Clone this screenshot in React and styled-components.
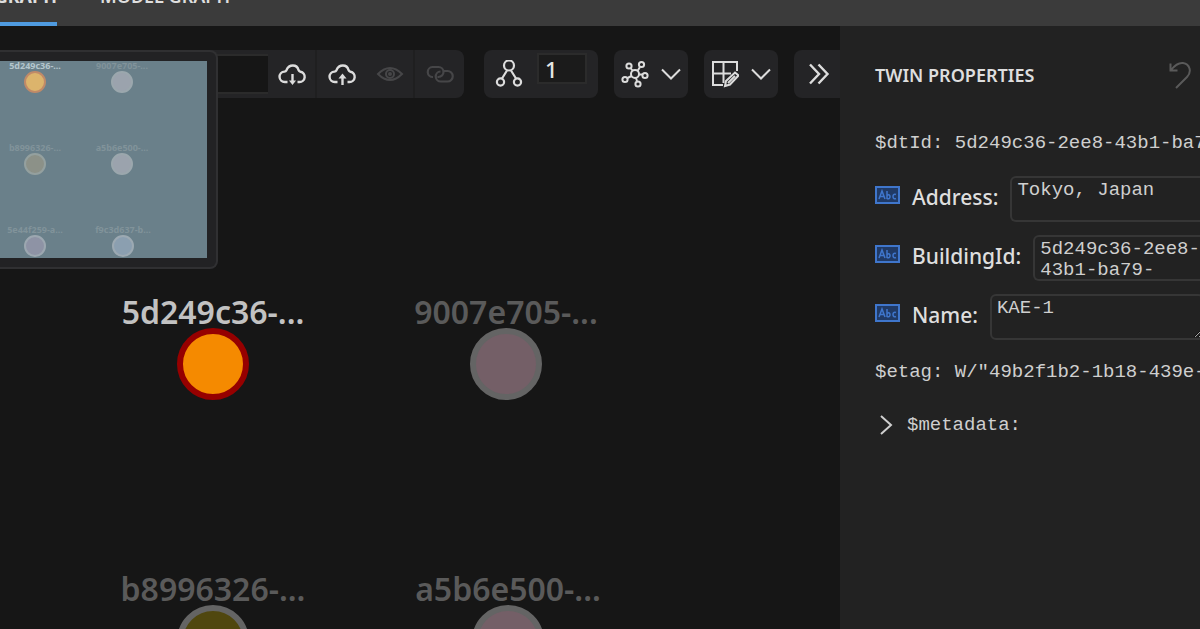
import React, { useState } from 'react';
import styled, { createGlobalStyle } from 'styled-components';

const GlobalStyle = createGlobalStyle`
    * {
        box-sizing: border-box;
    }

    body {
        margin: 0;
        overflow: hidden;
        background-color: #161616;
        color: #dcdcdc;
        font-family: 'Noto Sans', 'Open Sans', sans-serif;
    }

    button, input, textarea {
        font-family: inherit;
        color: inherit;
    }
`;

const Page = styled.div`
    display: flex;
    flex-direction: column;
    height: 100vh;
    overflow: hidden;
`;

const TabBar = styled.nav`
    display: flex;
    align-items: flex-end;
    flex: none;
    height: 26px;
    gap: 43px;
    overflow: hidden;
    background-color: #3b3b3b;
`;

const Tab = styled.button`
    display: flex;
    justify-content: flex-end;
    flex: none;
    width: ${({ $width }) => ($width ? `${$width}px` : 'auto')};
    height: 40px;
    padding: 0 0 16px;
    border: 0;
    border-bottom: 4px solid ${({ $active }) => ($active ? '#4f9be0' : 'transparent')};
    background: none;
    color: #dedede;
    font-size: 18px;
    font-weight: ${({ $active }) => ($active ? 700 : 600)};
    line-height: 20px;
    white-space: nowrap;
    overflow: hidden;
`;

const Content = styled.div`
    display: flex;
    flex: 1;
    min-height: 0;
`;

const Viewer = styled.main`
    position: relative;
    flex: 1;
    min-width: 0;
    overflow: hidden;
    padding-top: 24px;
    background-color: #161616;
`;

const Toolbar = styled.div`
    display: flex;
    gap: 16px;
    overflow: hidden;
`;

const ToolGroup = styled.div`
    display: flex;
    align-items: center;
    flex: none;
    height: 48px;
    width: ${({ $width }) => $width}px;
    border-radius: ${({ $first }) => ($first ? '0 8px 8px 0' : '8px')};
    margin-right: ${({ $first }) => ($first ? 4 : 0)}px;
    background-color: #242426;
    overflow: hidden;
`;

const SearchInput = styled.input`
    flex: 1;
    min-width: 0;
    height: 40px;
    border: 2px solid #2b2b2b;
    border-width: 2px 0;
    background-color: #161616;
`;

const ToolButton = styled.button`
    display: flex;
    align-items: center;
    justify-content: center;
    flex: ${({ $grow }) => ($grow ? 1 : 'none')};
    gap: 12px;
    width: ${({ $grow }) => ($grow ? 'auto' : '49px')};
    height: 48px;
    padding: 0;
    border: 0;
    border-right: ${({ $divider }) => ($divider ? '2px solid #1f1f20' : '0')};
    background: none;
    color: ${({ disabled }) => (disabled ? '#464648' : '#dcdcdc')};
`;

const LevelInput = styled.input`
    align-self: flex-start;
    width: 50px;
    height: 31px;
    margin: 3px 11px 0 4px;
    padding: 0 6px;
    border: 2px solid #2b2b2b;
    background-color: #1b1b1b;
    color: #e6e6e6;
    font-size: 22px;
    font-weight: 500;
    line-height: 26px;
`;

const MiniMap = styled.div`
    position: absolute;
    top: 24px;
    left: 0;
    width: 218px;
    height: 219px;
    padding: 9px 9px 9px 0;
    border: 2px solid #303032;
    border-left: 0;
    border-radius: 0 8px 8px 0;
    background-color: #222224;

    svg {
        display: block;
        width: 100%;
        height: 100%;
        background-color: #6a808a;
        font-family: 'Noto Sans', sans-serif;
        font-size: 9px;
        font-weight: 700;
    }
`;

const GraphNode = styled.div`
    position: absolute;
    top: ${({ $y }) => $y}px;
    left: ${({ $x }) => $x}px;
    display: flex;
    flex-direction: column;
    align-items: center;
    width: 240px;
    margin-left: -120px;
`;

const NodeLabel = styled.span`
    color: ${({ $selected }) => ($selected ? '#c2c2c2' : '#5a5a5a')};
    font-size: 32px;
    font-weight: 600;
    line-height: 32px;
    white-space: nowrap;
`;

const NodeCircle = styled.span`
    width: 72px;
    height: 72px;
    border: 6px solid ${({ $ring }) => $ring};
    border-radius: 50%;
    background-color: ${({ $fill }) => $fill};
`;

const Panel = styled.aside`
    flex: none;
    width: 30%;
    padding: 32px 0 0 35px;
    overflow: hidden;
    background-color: #222222;
`;

const PanelHeader = styled.header`
    display: flex;
    align-items: center;
    justify-content: space-between;
    height: 34px;
    padding-right: 9px;
    color: #5a5a5a;
`;

const PanelTitle = styled.h2`
    margin: 0;
    color: #dedede;
    font-size: 18px;
    font-weight: 600;
    white-space: nowrap;
`;

const IconButton = styled.button`
    display: flex;
    padding: 0;
    border: 0;
    background: none;
    color: inherit;
`;

const TextRow = styled.div`
    display: flex;
    align-items: center;
    gap: 14px;
    height: ${({ $height }) => $height}px;
    padding: ${({ $padding }) => $padding || 0};
    color: #cfcfcf;
    font-family: 'Liberation Mono', monospace;
    font-size: 19px;
    white-space: pre;
`;

const PropertyList = styled.div`
    display: grid;
    gap: 13px;
`;

const PropertyRow = styled.div`
    display: flex;
    height: 46px;
`;

const PropertyIcon = styled.span`
    flex: none;
    width: 37px;
    padding-top: 10px;
`;

const PropertyLabel = styled.label`
    flex: none;
    padding: 6px 12px 0 0;
    color: #dedede;
    font-size: 21px;
    font-weight: 500;
    line-height: 30px;
`;

const PropertyInput = styled.textarea`
    flex: ${({ $width }) => ($width ? 'none' : 1)};
    width: ${({ $width }) => ($width ? `${$width}px` : 'auto')};
    min-width: 0;
    height: 46px;
    padding: 2px 0 0 5px;
    border: 2px solid #363636;
    border-right-width: ${({ $width }) => ($width ? 2 : 0)}px;
    border-radius: ${({ $width }) => ($width ? '6px' : '6px 0 0 6px')};
    background-color: #222222;
    color: #cfcfcf;
    font-family: 'Liberation Mono', monospace;
    font-size: 19px;
    line-height: 21px;
    overflow: hidden;
    resize: ${({ $width }) => ($width ? 'both' : 'none')};
`;

const stroke = { fill: 'none', stroke: 'currentColor', strokeWidth: 2 };

const cloudPath = 'M9.500 19H7A5.200 5.200 0 0 1 6.500 8.600C8 8.500 8 8 8.500 7C11 1 19 1 20.500 7C21 8.300 21.500 8.500 22.500 8.700A5.200 5.200 0 0 1 21.500 19H19.500';

const CloudDownloadIcon = () => (
    <svg width="30" height="26" viewBox="-1 -2 30 26" {...stroke} strokeWidth="2.4">
        <path d={cloudPath} />
        <path d="M14.500 11v8" />
        <path d="M11 17.500h7l-3.500 4.500z" fill="currentColor" stroke="none" />
    </svg>
);

const CloudUploadIcon = () => (
    <svg width="30" height="26" viewBox="-1 -2 30 26" {...stroke} strokeWidth="2.4">
        <path d={cloudPath} />
        <path d="M14.500 14v8" />
        <path d="M10.500 15.500l4-5l4 5z" fill="currentColor" stroke="none" />
    </svg>
);

const EyeIcon = () => (
    <svg width="28" height="18" viewBox="-1 0 28 18" {...stroke}>
        <path d="M1 9Q7 3 13 3T25 9Q19 15 13 15T1 9z" />
        <circle cx="13" cy="9" r="4" />
        <circle cx="13" cy="9" r="1" />
    </svg>
);

const LinkIcon = () => (
    <svg width="28" height="20" viewBox="0 0 28 20" {...stroke} strokeWidth="2.2">
        <path d="M7 13A5 5 0 0 1 6.500 3H12.500A5 5 0 0 1 12.500 13H11.500" />
        <path d="M18 7H21.500A5 5 0 0 1 21.500 17.500H15A5 5 0 0 1 14.500 7.500" />
    </svg>
);

const LevelsIcon = () => (
    <svg width="28" height="28" viewBox="0 1 28 28" {...stroke} strokeWidth="2.2">
        <circle cx="14" cy="6.500" r="5" />
        <circle cx="5.500" cy="23" r="3.600" />
        <circle cx="22.500" cy="23" r="3.600" />
        <path d="M12 11.500L7 19.500M16 11.500L21 19.500" />
    </svg>
);

const LayoutIcon = () => (
    <svg width="28" height="28" viewBox="0 0 28 28" {...stroke}>
        <circle cx="14" cy="14" r="4" />
        <circle cx="8" cy="6" r="2.600" />
        <circle cx="20.500" cy="4.500" r="2.600" />
        <circle cx="24" cy="15.500" r="2.600" />
        <circle cx="17" cy="24" r="2.600" />
        <circle cx="4" cy="19.500" r="2.600" />
        <path d="M9.500 8l2 2.500M19 7l-2.500 4M18 14.500h3M15 18l1 3M10.500 16l-4 2" />
    </svg>
);

const GridEditIcon = () => (
    <svg width="28" height="28" viewBox="0 0 28 28" {...stroke}>
        <path d="M12 25H2V2H26V11M12.500 2V23M2 13.500H20" />
        <path d="M14 26L15 21L24 12.500L27.500 15.500L19 24.500z" />
        <path d="M17 23l7-7" />
    </svg>
);

const ChevronDownIcon = () => (
    <svg width="20" height="12" viewBox="0 0 20 12" {...stroke}>
        <path d="M1 1.500l9 9l9-9" />
    </svg>
);

const DoubleChevronIcon = () => (
    <svg width="22" height="22" viewBox="0 0 22 22" {...stroke} strokeWidth="2.4">
        <path d="M2 1.500l9 9.500l-9 9.500M10.500 1.500l9 9.500l-9 9.500" />
    </svg>
);

const UndoIcon = () => (
    <svg width="22" height="28" viewBox="0 0 22 28" {...stroke}>
        <path d="M1.500 2.500V9.500H8.500M2 9C6 4 10 1.500 14 2C21 3 23 11 18 16L7 27" />
    </svg>
);

const ChevronRightIcon = () => (
    <svg width="14" height="20" viewBox="0 0 14 20" {...stroke}>
        <path d="M2 1l10 9L2 19" />
    </svg>
);

const AbcIcon = () => (
    <svg width="25" height="18" viewBox="0 0 25 18" {...stroke} stroke="#3f76cc">
        <rect x="1" y="1" width="23" height="16" fill="#203a66" />
        <path
            d="M4 13l3-8l3 8M5 10.500h4M12 5v8M12 9.500c4-3 4 5 0 3M21 8.500c-4-2-4 6 0 4"
            strokeWidth="1.5"
        />
    </svg>
);

const nodes = [
    { id: '5d249c36-...', x: 213, y: 270, ring: '#960000', fill: '#f58a00', selected: true },
    { id: '9007e705-...', x: 506, y: 270, ring: '#646464', fill: '#745f67' },
    { id: 'b8996326-...', x: 213, y: 547, ring: '#646464', fill: '#50470f' },
    { id: 'a5b6e500-...', x: 508, y: 547, ring: '#646464', fill: '#745f67' },
];

const miniNodes = [
    { id: '5d249c36-...', x: 35, y: 21, fill: '#dcb46c', ring: '#c08a68', text: '#b4c6cd' },
    { id: '9007e705-...', x: 122, y: 21, fill: '#9ba3ad', ring: '#9ba7ad', text: '#81939a' },
    { id: 'b8996326-...', x: 35, y: 103, fill: '#8c9188', ring: '#94a09f', text: '#81939a' },
    { id: 'a5b6e500-...', x: 122, y: 103, fill: '#9ba3ad', ring: '#9ba7ad', text: '#81939a' },
    { id: '5e44f259-a...', x: 35, y: 185, fill: '#8e93a5', ring: '#9ca7b0', text: '#81939a' },
    { id: 'f9c3d637-b...', x: 123, y: 185, fill: '#8b9fb0', ring: '#9ca9b2', text: '#81939a' },
];

const initialProperties = [
    { name: 'Address', value: 'Tokyo, Japan' },
    { name: 'BuildingId', value: '5d249c36-2ee8-\n43b1-ba79-' },
    { name: 'Name', value: 'KAE-1', width: 214 },
];

const App = () => {
    const [level, setLevel] = useState('1');
    const [search, setSearch] = useState('');
    const [properties, setProperties] = useState(initialProperties);

    const handleChange = (name, value) => {
        setProperties(properties.map((p) => (p.name === name ? { ...p, value } : p)));
    };

    return (
        <Page>
            <GlobalStyle />
            <TabBar>
                <Tab $active $width={57}>TWIN GRAPH</Tab>
                <Tab>MODEL GRAPH</Tab>
            </TabBar>
            <Content>
                <Viewer>
                    <Toolbar>
                        <ToolGroup $first $width={464}>
                            <SearchInput
                                aria-label="Search"
                                value={search}
                                onChange={(e) => setSearch(e.target.value)}
                            />
                            <ToolButton $divider aria-label="Import"><CloudDownloadIcon /></ToolButton>
                            <ToolButton aria-label="Export"><CloudUploadIcon /></ToolButton>
                            <ToolButton $divider disabled aria-label="Show"><EyeIcon /></ToolButton>
                            <ToolButton disabled aria-label="Relationships"><LinkIcon /></ToolButton>
                        </ToolGroup>
                        <ToolGroup $width={114}>
                            <ToolButton aria-label="Expansion level"><LevelsIcon /></ToolButton>
                            <LevelInput
                                aria-label="Level"
                                value={level}
                                onChange={(e) => setLevel(e.target.value)}
                            />
                        </ToolGroup>
                        <ToolGroup $width={74}>
                            <ToolButton $grow aria-label="Layout"><LayoutIcon /><ChevronDownIcon /></ToolButton>
                        </ToolGroup>
                        <ToolGroup $width={74}>
                            <ToolButton $grow aria-label="Edit view"><GridEditIcon /><ChevronDownIcon /></ToolButton>
                        </ToolGroup>
                        <ToolGroup $width={56}>
                            <ToolButton aria-label="More"><DoubleChevronIcon /></ToolButton>
                        </ToolGroup>
                    </Toolbar>

                    {nodes.map((node) => (
                        <GraphNode key={node.id} $x={node.x} $y={node.y}>
                            <NodeLabel $selected={node.selected}>{node.id}</NodeLabel>
                            <NodeCircle $ring={node.ring} $fill={node.fill} />
                        </GraphNode>
                    ))}

                    <MiniMap>
                        <svg>
                            {miniNodes.map((node) => (
                                <g key={node.id}>
                                    <text x={node.x} y={node.y - 13} textAnchor="middle" fill={node.text}>
                                        {node.id}
                                    </text>
                                    <circle cx={node.x} cy={node.y} r="10" fill={node.fill} stroke={node.ring} strokeWidth="2" />
                                </g>
                            ))}
                        </svg>
                    </MiniMap>
                </Viewer>

                <Panel>
                    <PanelHeader>
                        <PanelTitle>TWIN PROPERTIES</PanelTitle>
                        <IconButton aria-label="Undo"><UndoIcon /></IconButton>
                    </PanelHeader>
                    <TextRow $height={84} $padding="18px 0 0">$dtId: 5d249c36-2ee8-43b1-ba79</TextRow>
                    <PropertyList>
                        {properties.map(({ name, value, width }) => (
                            <PropertyRow key={name}>
                                <PropertyIcon><AbcIcon /></PropertyIcon>
                                <PropertyLabel htmlFor={name}>{name}:</PropertyLabel>
                                <PropertyInput
                                    id={name}
                                    $width={width}
                                    value={value}
                                    spellCheck={false}
                                    onChange={(e) => handleChange(name, e.target.value)}
                                />
                            </PropertyRow>
                        ))}
                    </PropertyList>
                    <TextRow $height={64}>$etag: W/"49b2f1b2-1b18-439e-</TextRow>
                    <TextRow $height={42} $padding="0 0 0 4px">
                        <IconButton aria-label="Expand metadata"><ChevronRightIcon /></IconButton>
                        <span>$metadata:</span>
                    </TextRow>
                </Panel>
            </Content>
        </Page>
    );
};

export default App;
